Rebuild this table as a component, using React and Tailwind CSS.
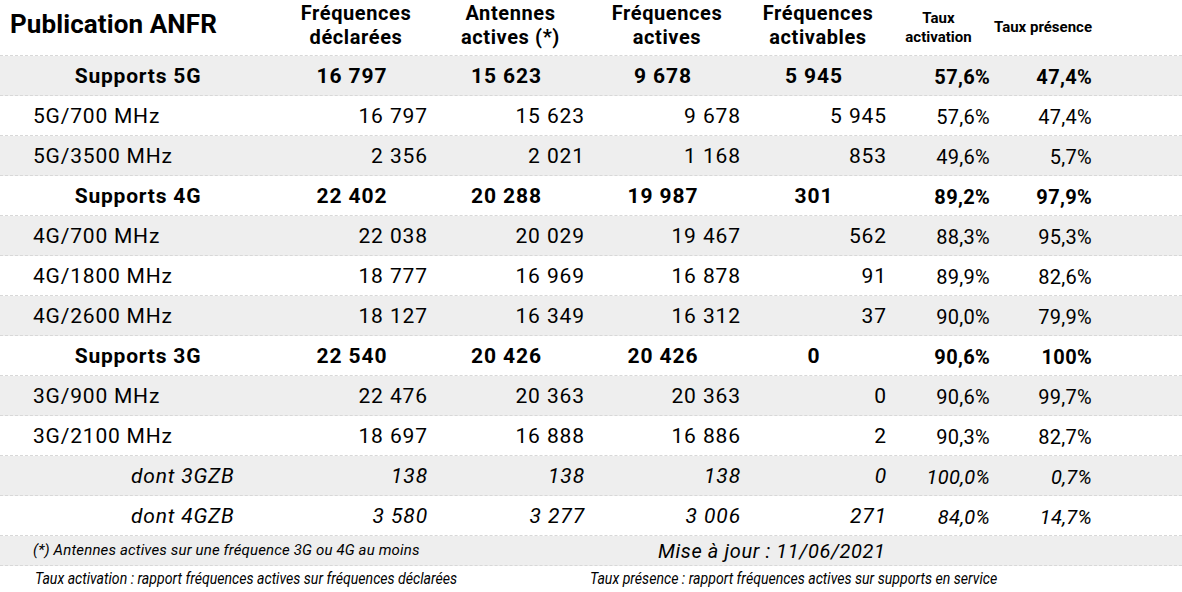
import React from "react";

const GRID =
  "grid grid-cols-[280px_152px_157px_156px_146px_103px_102px_1fr] items-center";

const rows = [
  { kind: "group", label: "Supports 5G", v: ["16 797", "15 623", "9 678", "5 945", "57,6%", "47,4%"] },
  { kind: "band", label: "5G/700 MHz", v: ["16 797", "15 623", "9 678", "5 945", "57,6%", "47,4%"] },
  { kind: "band", label: "5G/3500 MHz", v: ["2 356", "2 021", "1 168", "853", "49,6%", "5,7%"] },
  { kind: "group", label: "Supports 4G", v: ["22 402", "20 288", "19 987", "301", "89,2%", "97,9%"] },
  { kind: "band", label: "4G/700 MHz", v: ["22 038", "20 029", "19 467", "562", "88,3%", "95,3%"] },
  { kind: "band", label: "4G/1800 MHz", v: ["18 777", "16 969", "16 878", "91", "89,9%", "82,6%"] },
  { kind: "band", label: "4G/2600 MHz", v: ["18 127", "16 349", "16 312", "37", "90,0%", "79,9%"] },
  { kind: "group", label: "Supports 3G", v: ["22 540", "20 426", "20 426", "0", "90,6%", "100%"] },
  { kind: "band", label: "3G/900 MHz", v: ["22 476", "20 363", "20 363", "0", "90,6%", "99,7%"] },
  { kind: "band", label: "3G/2100 MHz", v: ["18 697", "16 888", "16 886", "2", "90,3%", "82,7%"] },
  { kind: "zb", label: "dont 3GZB", v: ["138", "138", "138", "0", "100,0%", "0,7%"] },
  { kind: "zb", label: "dont 4GZB", v: ["3 580", "3 277", "3 006", "271", "84,0%", "14,7%"] },
];

function Row({ row, gray }) {
  const bold = row.kind === "group";
  const italic = row.kind === "zb";
  return (
    <div
      className={`${GRID} h-10 pt-[2px] border-b border-dashed border-[#d8d8d8] ${
        gray ? "bg-[#eeeeee]" : "bg-white"
      } ${bold ? "font-bold" : ""} ${italic ? "italic" : ""}`}
    >
      <div
        className={`text-[21px] tracking-[0.8px] whitespace-nowrap ${
          bold ? "text-center pr-1" : italic ? "pl-[131px]" : "pl-[33px]"
        }`}
      >
        {row.label}
      </div>
      {row.v.slice(0, 4).map((n, i) => (
        <div
          key={i}
          className={`text-[21px] tracking-[0.9px] whitespace-nowrap ${
            bold ? "text-center pr-2" : "text-right pr-1"
          }`}
        >
          {n.replace(" ", "\u00a0")}
        </div>
      ))}
      {row.v.slice(4).map((p, i) => (
        <div key={i} className="text-[20px] tracking-[0.3px] text-right pr-1 whitespace-nowrap">
          {p}
        </div>
      ))}
      <div />
    </div>
  );
}

export default function App() {
  return (
    <div className="w-[1182px] h-[592px] bg-white text-black font-['Roboto',sans-serif] overflow-hidden">
      {/* Header */}
      <div className={`${GRID} h-14 border-b border-dashed border-[#d8d8d8] font-bold`}>
        <div className="text-[26px] leading-[30px] tracking-[0.1px] pl-[10px] pb-2">
          Publication ANFR
        </div>
        <div className="text-[20px] leading-6 tracking-[0.6px] text-center pb-1.5">
          Fréquences
          <br />
          déclarées
        </div>
        <div className="text-[20px] leading-6 tracking-[0.6px] text-center pb-1.5">
          Antennes
          <br />
          actives (*)
        </div>
        <div className="text-[20px] leading-6 tracking-[0.6px] text-center pb-1.5">
          Fréquences
          <br />
          actives
        </div>
        <div className="text-[20px] leading-6 tracking-[0.6px] text-center pb-1.5">
          Fréquences
          <br />
          activables
        </div>
        <div className="text-[15px] leading-[19px] text-center pr-2">
          Taux
          <br />
          activation
        </div>
        <div className="text-[15px] leading-[19px] text-center whitespace-nowrap pr-1">
          Taux présence
        </div>
        <div />
      </div>

      {rows.map((r, i) => (
        <Row key={r.label} row={r} gray={i % 2 === 0} />
      ))}

      {/* Footnote */}
      <div className="flex items-center h-[30px] bg-[#eeeeee] border-b border-dashed border-[#d8d8d8] italic">
        <div className="w-[658px] pl-[33px] text-[15px] tracking-[0.15px] whitespace-nowrap">
          (*) Antennes actives sur une fréquence 3G ou 4G au moins
        </div>
        <div className="text-[20px] tracking-[0.6px] whitespace-nowrap">
          Mise à jour : 11/06/2021
        </div>
      </div>

      {/* Definitions */}
      <div className="flex items-center h-[26px] italic text-[17px] whitespace-nowrap">
        <div className="w-[590px] pl-[35px]">
          <span className="inline-block origin-left scale-x-[0.83]">
            Taux activation : rapport fréquences actives sur fréquences déclarées
          </span>
        </div>
        <div>
          <span className="inline-block origin-left scale-x-[0.83]">
            Taux présence : rapport fréquences actives sur supports en service
          </span>
        </div>
      </div>
    </div>
  );
}
